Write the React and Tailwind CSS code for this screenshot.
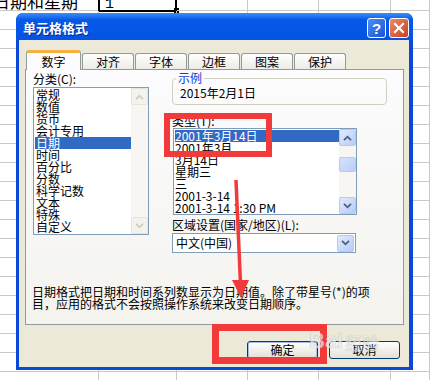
import { Fragment } from 'react';

const categories = ['常规', '数值', '货币', '会计专用', '日期', '时间', '百分比', '分数', '科学记数', '文本', '特殊', '自定义'];
const types = ['2001年3月14日', '2001年3月', '3月14日', '星期三', '三', '2001-3-14', '2001-3-14 1:30 PM'];
const tabs = ['对齐', '字体', '边框', '图案', '保护'];
const colWidths = [0, 1, 2, 3, 4, 5];

function Chevron({ up, color }) {
  return (
    <svg width="9" height="6" viewBox="0 0 9 6">
      <path d={up ? 'M1 5.2 L4.5 1.7 L8 5.2' : 'M1 0.8 L4.5 4.3 L8 0.8'} fill="none" stroke={color} strokeWidth="1.8" />
    </svg>
  );
}

function ScrollButton({ up, disabled }) {
  if (disabled) {
    return (
      <div className="flex h-[17px] w-[17px] items-center justify-center rounded-[2px] border border-[#e6e4dc] bg-[#f3f2ec]">
        <Chevron up={up} color="#cfcdc2" />
      </div>
    );
  }
  return (
    <div className="flex h-[17px] w-[17px] items-center justify-center rounded-[2px] border border-[#b7c9f2] bg-linear-to-br from-[#e2ebfd] to-[#b6cbf7]">
      <Chevron up={up} color="#4d6185" />
    </div>
  );
}

/**
 * Sheet grid behind the dialog.
 */
function Sheet() {
  const rows = Array.from({ length: 21 });
  return (
    <div className="-mt-[8px] grid grid-cols-[99px_78px_71px_71px_72px_1fr]">
      {rows.map((_, r) => (
        <Fragment key={r}>
          {colWidths.map((c) => (
            <div key={c} className="relative flex h-[19px] items-end border-b border-r border-[#c9c9c9]">
              {r === 0 && c === 0 && (
                <span className="-ml-[7px] whitespace-nowrap pb-px text-[17px] leading-[17px]">日期和星期</span>
              )}
              {r === 0 && c === 1 && (
                <>
                  <span className="pl-[6px] font-['Liberation_Mono',monospace] text-[15px] leading-[11px]">2015-2-1</span>
                  <div className="absolute -bottom-[2px] -left-[1px] -right-[1px] -top-[1px] border-2 border-black" />
                  <div className="absolute -bottom-[3px] -right-[3px] h-[5px] w-[5px] bg-black" />
                </>
              )}
            </div>
          ))}
        </Fragment>
      ))}
    </div>
  );
}

function ListBox({ items, selected, width, height, thumb, disabled, pad }) {
  return (
    <div className={`flex border border-[#7f9db9] bg-white ${width} ${height}`}>
      <div className="flex-1 py-px pl-px">
        {items.map((item) => (
          <div
            key={item}
            className={`h-[12px] whitespace-nowrap text-[12px] leading-[12px] ${pad} ${item === selected ? 'bg-[#316ac5] text-white' : ''}`}
          >
            {item}
          </div>
        ))}
      </div>
      <div className="flex w-[17px] flex-col bg-[#f7f6f2]">
        <ScrollButton up disabled={disabled} />
        {thumb && (
          <div className="mt-[11px] h-[15px] w-[17px] rounded-[2px] border border-[#b7c9f2] bg-linear-to-br from-[#d6e3fd] to-[#b9cdf7]" />
        )}
        <div className="mt-auto">
          <ScrollButton disabled={disabled} />
        </div>
      </div>
    </div>
  );
}

function Dialog() {
  return (
    <div className="absolute left-[16px] top-[13px] flex h-[357px] w-[397px] flex-col rounded-t-[7px] bg-[#0a48d8]">
      <div className="flex h-[27px] items-center rounded-t-[7px] bg-linear-to-b from-[#3d8df6] via-[#0459e8] via-25% to-[#0553e2] pl-[7px] pr-[4px] pt-[3px]">
        <span className="text-[13px] font-bold leading-[14px] text-white [text-shadow:1px_1px_0_#0c2a8f]">单元格格式</span>
        <div className="ml-auto flex gap-[3px]">
          <div className="flex h-[20px] w-[19px] items-center justify-center rounded-[3px] border border-white bg-linear-to-br from-[#4d8df5] to-[#1b52d4] text-[15px] font-bold leading-none text-white font-['Liberation_Sans',sans-serif]">
            ?
          </div>
          <div className="flex h-[20px] w-[20px] items-center justify-center rounded-[3px] border border-white bg-linear-to-br from-[#e98a67] to-[#c7401c]">
            <svg width="12" height="12" viewBox="0 0 12 12">
              <path d="M2 2 L10 10 M10 2 L2 10" stroke="white" strokeWidth="2.2" strokeLinecap="square" />
            </svg>
          </div>
        </div>
      </div>

      <div className="mb-[3px] ml-[3px] mr-[4px] flex flex-1 flex-col bg-[#ece9d8] pt-[10px]">
        <div className="relative z-10 flex h-[19px] items-end pl-[7px] text-[12px] leading-[12px]">
          <div className="-mb-px flex h-[20px] w-[55px] items-center justify-center rounded-t-[3px] border-x border-t-[3px] border-[#919b9c] border-t-[#f4b13f] bg-[#fcfcfe] pt-px">
            数字
          </div>
          {tabs.map((t) => (
            <div
              key={t}
              className="ml-px flex h-[16px] w-[52px] items-center justify-center rounded-t-[3px] border border-b-0 border-[#919b9c] bg-linear-to-b from-white to-[#ecebe5] pt-px"
            >
              {t}
            </div>
          ))}
        </div>

        <div className="ml-[6px] flex h-[256px] w-[379px] flex-col border border-[#919b9c] bg-linear-to-b from-[#fcfcfe] to-[#f4f3ee] text-[12px] leading-[12px]">
          <div className="flex items-start">
            <div className="ml-[7px] flex w-[116px] flex-col">
              <div className="mt-[3px] h-[12px]">分类(C):</div>
              <div className="mt-[2px]">
                <ListBox items={categories} selected="日期" width="w-[116px]" height="h-[148px]" disabled pad="pl-px" />
              </div>
            </div>

            <div className="ml-[23px] flex w-[215px] flex-col">
              <div className="relative mt-[8px] h-[27px] rounded-[4px] border border-[#d0d0bf] pl-[7px] pt-[8px]">
                <span className="absolute -top-[7px] left-[3px] bg-[#fbfbfc] px-[2px] text-[#0046d5]">示例</span>
                <span>2015年2月1日</span>
              </div>
              <div className="mt-[10px] h-[12px]">类型(T):</div>
              <div className="ml-px mt-px">
                <ListBox items={types} selected="2001年3月14日" width="w-[184px]" height="h-[87px]" thumb pad="" />
              </div>
              <div className="mt-[4px] h-[12px]">区域设置(国家/地区)(L):</div>
              <div className="mt-[2px] flex h-[20px] w-[184px] items-center border border-[#7f9db9] bg-white pl-[3px]">
                <span>中文(中国)</span>
                <div className="ml-auto mr-px">
                  <ScrollButton />
                </div>
              </div>
            </div>
          </div>

          <div className="ml-[6px] mt-[33px] flex flex-col">
            <div className="h-[12px] whitespace-nowrap">日期格式把日期和时间系列数显示为日期值。除了带星号(*)的项</div>
            <div className="h-[12px] whitespace-nowrap">目，应用的格式不会按照操作系统来改变日期顺序。</div>
          </div>
        </div>

        <div className="mt-[16px] flex justify-end gap-[11px] pr-[9px] text-[12px] leading-[12px]">
          <div className="flex h-[18px] w-[71px] items-center justify-center rounded-[3px] border border-[#003c74] bg-linear-to-b from-white to-[#e3e0d5] shadow-[inset_0_0_0_1px_#a6bde9]">
            确定
          </div>
          <div className="flex h-[18px] w-[71px] items-center justify-center rounded-[3px] border border-[#003c74] bg-linear-to-b from-white to-[#e3e0d5]">
            取消
          </div>
        </div>
      </div>
    </div>
  );
}

function Annotations() {
  return (
    <>
      <div className="absolute left-[164px] top-[113px] h-[44px] w-[108px] border-[6px] border-[#f23a3a]" />
      <div className="absolute left-[212px] top-[324px] h-[40px] w-[115px] border-[7px] border-[#f23a3a]" />
      <svg className="pointer-events-none absolute left-0 top-0" width="430" height="380">
        <line x1="236" y1="180" x2="240.5" y2="284" stroke="#f23a3a" strokeWidth="3.5" />
        <polygon points="232,280 249,280 241,298" fill="#f23a3a" />
      </svg>
      <div className="pointer-events-none absolute left-[309px] top-[330px] flex items-end gap-[2px] opacity-70">
        <span className="font-['Liberation_Sans',sans-serif] text-[22px] font-bold leading-[22px] text-[#e8e8e8] [text-shadow:0_0_1px_#8a8a8a]">Bai</span>
        <span className="text-[17px] leading-[18px] text-[#e8e8e8] [text-shadow:0_0_1px_#8a8a8a]">经验</span>
      </div>
    </>
  );
}

export default function App() {
  return (
    <div className="relative h-[380px] w-[430px] overflow-hidden bg-white font-['Noto_Sans_CJK_SC','Noto_Sans',sans-serif] text-black">
      <Sheet />
      <Dialog />
      <Annotations />
    </div>
  );
}
